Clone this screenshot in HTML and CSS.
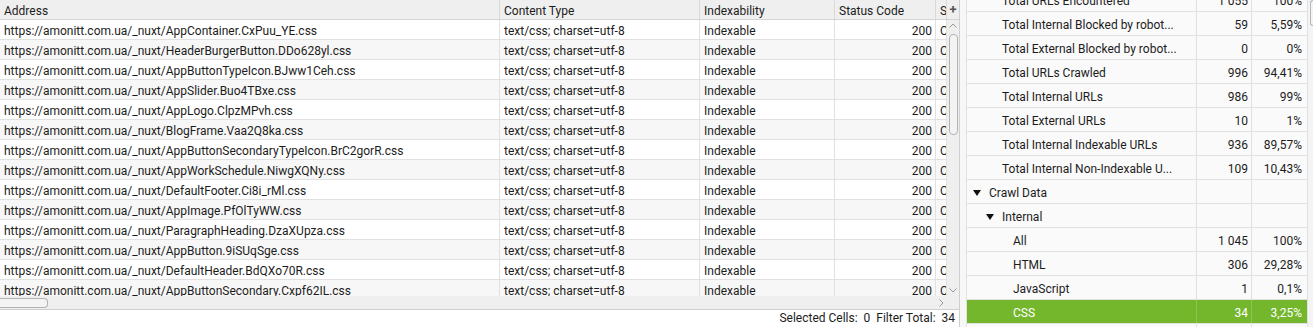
FILE: index.html
```html
<!DOCTYPE html>
<html lang="en">
<head>
  <meta charset="UTF-8" />
  <title>Crawl Overview</title>
  <link rel="stylesheet" href="styles.css">
</head>
<body>

  <!-- Results table -->
  <div class="left">
    <div class="grid-area">
      <div class="table">
        <div class="row head">
          <div class="cell">Address</div>
          <div class="cell">Content Type</div>
          <div class="cell">Indexability</div>
          <div class="cell">Status Code</div>
          <div class="cell">St</div>
        </div>
        <div class="row"><div class="cell">https://amonitt.com.ua/_nuxt/AppContainer.CxPuu_YE.css</div><div class="cell">text/css; charset=utf-8</div><div class="cell">Indexable</div><div class="cell num">200</div><div class="cell">O</div></div>
        <div class="row"><div class="cell">https://amonitt.com.ua/_nuxt/HeaderBurgerButton.DDo628yl.css</div><div class="cell">text/css; charset=utf-8</div><div class="cell">Indexable</div><div class="cell num">200</div><div class="cell">O</div></div>
        <div class="row"><div class="cell">https://amonitt.com.ua/_nuxt/AppButtonTypeIcon.BJww1Ceh.css</div><div class="cell">text/css; charset=utf-8</div><div class="cell">Indexable</div><div class="cell num">200</div><div class="cell">O</div></div>
        <div class="row"><div class="cell">https://amonitt.com.ua/_nuxt/AppSlider.Buo4TBxe.css</div><div class="cell">text/css; charset=utf-8</div><div class="cell">Indexable</div><div class="cell num">200</div><div class="cell">O</div></div>
        <div class="row"><div class="cell">https://amonitt.com.ua/_nuxt/AppLogo.ClpzMPvh.css</div><div class="cell">text/css; charset=utf-8</div><div class="cell">Indexable</div><div class="cell num">200</div><div class="cell">O</div></div>
        <div class="row"><div class="cell">https://amonitt.com.ua/_nuxt/BlogFrame.Vaa2Q8ka.css</div><div class="cell">text/css; charset=utf-8</div><div class="cell">Indexable</div><div class="cell num">200</div><div class="cell">O</div></div>
        <div class="row"><div class="cell">https://amonitt.com.ua/_nuxt/AppButtonSecondaryTypeIcon.BrC2gorR.css</div><div class="cell">text/css; charset=utf-8</div><div class="cell">Indexable</div><div class="cell num">200</div><div class="cell">O</div></div>
        <div class="row"><div class="cell">https://amonitt.com.ua/_nuxt/AppWorkSchedule.NiwgXQNy.css</div><div class="cell">text/css; charset=utf-8</div><div class="cell">Indexable</div><div class="cell num">200</div><div class="cell">O</div></div>
        <div class="row"><div class="cell">https://amonitt.com.ua/_nuxt/DefaultFooter.Ci8i_rMl.css</div><div class="cell">text/css; charset=utf-8</div><div class="cell">Indexable</div><div class="cell num">200</div><div class="cell">O</div></div>
        <div class="row"><div class="cell">https://amonitt.com.ua/_nuxt/AppImage.PfOlTyWW.css</div><div class="cell">text/css; charset=utf-8</div><div class="cell">Indexable</div><div class="cell num">200</div><div class="cell">O</div></div>
        <div class="row"><div class="cell">https://amonitt.com.ua/_nuxt/ParagraphHeading.DzaXUpza.css</div><div class="cell">text/css; charset=utf-8</div><div class="cell">Indexable</div><div class="cell num">200</div><div class="cell">O</div></div>
        <div class="row"><div class="cell">https://amonitt.com.ua/_nuxt/AppButton.9iSUqSge.css</div><div class="cell">text/css; charset=utf-8</div><div class="cell">Indexable</div><div class="cell num">200</div><div class="cell">O</div></div>
        <div class="row"><div class="cell">https://amonitt.com.ua/_nuxt/DefaultHeader.BdQXo70R.css</div><div class="cell">text/css; charset=utf-8</div><div class="cell">Indexable</div><div class="cell num">200</div><div class="cell">O</div></div>
        <div class="row"><div class="cell">https://amonitt.com.ua/_nuxt/AppButtonSecondary.Cxpf62IL.css</div><div class="cell">text/css; charset=utf-8</div><div class="cell">Indexable</div><div class="cell num">200</div><div class="cell">O</div></div>
      </div>

      <div class="vscroll">
        <div class="plus">+</div>
        <svg class="arrow" width="8" height="5" viewBox="0 0 8 5"><path d="M0.5 4.5 L4 1 L7.5 4.5" fill="none" stroke="#9a9a9a" stroke-width="1"/></svg>
        <div class="vthumb"></div>
        <div class="spacer"></div>
        <svg class="arrow" width="8" height="5" viewBox="0 0 8 5"><path d="M0.5 0.5 L4 4 L7.5 0.5" fill="none" stroke="#9a9a9a" stroke-width="1"/></svg>
      </div>
    </div>

    <div class="hscroll">
      <div class="hthumb"></div>
      <svg class="harrow" width="5" height="8" viewBox="0 0 5 8"><path d="M0.5 0.5 L4 4 L0.5 7.5" fill="none" stroke="#9a9a9a" stroke-width="1"/></svg>
    </div>

    <div class="status">Selected Cells:&nbsp; 0&nbsp; Filter Total:&nbsp; 34</div>
  </div>

  <div class="splitter"></div>

  <!-- Overview tree -->
  <div class="right">
    <div class="tree">
      <div class="trow"><div class="label lvl1">Total URLs Encountered</div><div class="val">1 055</div><div class="val pct">100%</div></div>
      <div class="trow"><div class="label lvl1">Total Internal Blocked by robot...</div><div class="val">59</div><div class="val pct">5,59%</div></div>
      <div class="trow"><div class="label lvl1">Total External Blocked by robot...</div><div class="val">0</div><div class="val pct">0%</div></div>
      <div class="trow"><div class="label lvl1">Total URLs Crawled</div><div class="val">996</div><div class="val pct">94,41%</div></div>
      <div class="trow"><div class="label lvl1">Total Internal URLs</div><div class="val">986</div><div class="val pct">99%</div></div>
      <div class="trow"><div class="label lvl1">Total External URLs</div><div class="val">10</div><div class="val pct">1%</div></div>
      <div class="trow"><div class="label lvl1">Total Internal Indexable URLs</div><div class="val">936</div><div class="val pct">89,57%</div></div>
      <div class="trow"><div class="label lvl1">Total Internal Non-Indexable U...</div><div class="val">109</div><div class="val pct">10,43%</div></div>
      <div class="trow"><div class="label lvl0"><svg class="tri" width="8" height="6" viewBox="0 0 8 6"><path d="M0 0 H8 L4 6 Z" fill="#111"/></svg>Crawl Data</div><div class="val"></div><div class="val pct"></div></div>
      <div class="trow"><div class="label lvl1 group"><svg class="tri" width="8" height="6" viewBox="0 0 8 6"><path d="M0 0 H8 L4 6 Z" fill="#111"/></svg>Internal</div><div class="val"></div><div class="val pct"></div></div>
      <div class="trow"><div class="label lvl2">All</div><div class="val">1 045</div><div class="val pct">100%</div></div>
      <div class="trow"><div class="label lvl2">HTML</div><div class="val">306</div><div class="val pct">29,28%</div></div>
      <div class="trow"><div class="label lvl2">JavaScript</div><div class="val">1</div><div class="val pct">0,1%</div></div>
      <div class="trow selected"><div class="label lvl2">CSS</div><div class="val">34</div><div class="val pct">3,25%</div></div>
      <div class="trow"><div class="label lvl2">&nbsp;</div><div class="val"></div><div class="val pct"></div></div>
    </div>
    <div class="rscroll">
      <div class="rthumb"></div>
    </div>
  </div>

</body>
</html>
```

FILE: styles.css
```css
* {
  box-sizing: border-box;
}

body {
  margin: 0;
  width: 1313px;
  height: 327px;
  overflow: hidden;
  display: flex;
  font-family: Roboto, "Liberation Sans", sans-serif;
  font-size: 12px;
  color: #1c1c1c;
  background: #fff;
}

/* left results table */

.left {
  width: 960px;
  height: 327px;
  display: flex;
  flex-direction: column;
  border-right: 1px solid #cfcfcf;
}

.grid-area {
  height: 297px;
  display: flex;
  overflow: hidden;
}

.table {
  width: 947px;
  overflow: hidden;
}

.row {
  display: grid;
  grid-template-columns: 500px 200px 135px 101px 11px;
  height: 20px;
  border-bottom: 1px solid #e1e1e1;
  background: #fff;
}

.row:nth-child(odd) {
  background: #f7f7f7;
}

.row.head {
  background: #efefef;
  border-bottom: 1px solid #d4d4d4;
}

.cell {
  padding: 0 3px 0 4px;
  line-height: 22px;
  white-space: nowrap;
  overflow: hidden;
  border-right: 1px solid #e1e1e1;
}

.head .cell {
  border-right: 1px solid #d9d9d9;
  padding-left: 4px;
}

.cell.num {
  text-align: right;
}

.vscroll {
  width: 12px;
  display: flex;
  flex-direction: column;
  align-items: center;
  background: #efefef;
}

.plus {
  width: 12px;
  height: 20px;
  line-height: 19px;
  text-align: center;
  font-weight: bold;
  font-size: 13px;
  color: #555;
  border-bottom: 1px solid #d4d4d4;
}

.arrow {
  margin: 3px 0;
  flex-shrink: 0;
}

.vthumb {
  width: 9px;
  height: 101px;
  margin-top: 3px;
  border: 1px solid #b2b2b2;
  border-radius: 4px;
  background: #f3f3f3;
  flex-shrink: 0;
}

.spacer {
  flex: 1;
}

.hscroll {
  height: 14px;
  display: flex;
  align-items: center;
  justify-content: space-between;
  padding-right: 15px;
  background: #efefef;
  border-bottom: 1px solid #cfcfcf;
}

.hthumb {
  width: 48px;
  height: 10px;
  border: 1px solid #b2b2b2;
  border-left: none;
  border-radius: 0 4px 4px 0;
  background: #f3f3f3;
}

.status {
  flex: 1;
  text-align: right;
  padding-right: 4px;
  line-height: 17px;
  white-space: pre;
  background: #fff;
}

.splitter {
  width: 6px;
  background: #f7f7f7;
}

/* right overview tree */

.right {
  flex: 1;
  display: flex;
  overflow: hidden;
}

.tree {
  width: 342px;
  margin-top: -12px;
  border-left: 1px solid #e1e1e1;
  border-right: 1px solid #e1e1e1;
}

.trow {
  display: grid;
  grid-template-columns: 230px 55px 55px;
  height: 24px;
  border-bottom: 1px solid #e1e1e1;
  background: #fafafa;
}

.trow > div {
  line-height: 27px;
  white-space: nowrap;
  overflow: hidden;
}

.label {
  border-right: 1px solid #e1e1e1;
}

.lvl0 {
  padding-left: 6px;
}

.lvl1 {
  padding-left: 35px;
}

.lvl1.group {
  padding-left: 19px;
}

.lvl2 {
  padding-left: 46px;
}

.tri {
  margin-right: 8px;
  vertical-align: 1px;
}

.val {
  text-align: right;
  padding-right: 3px;
  border-right: 1px solid #e1e1e1;
}

.val.pct {
  padding-right: 5px;
  border-right: none;
}

.trow.selected {
  background: #74b72d;
  color: #fff;
}

.trow.selected > div {
  border-right-color: #8cc44f;
}

.rscroll {
  width: 5px;
  background: #f4f4f4;
  padding-left: 2px;
}

.rthumb {
  height: 26px;
  border: 1px solid #b8b8b8;
  border-right: none;
  border-radius: 3px 0 0 3px;
  background: #f3f3f3;
}
```
